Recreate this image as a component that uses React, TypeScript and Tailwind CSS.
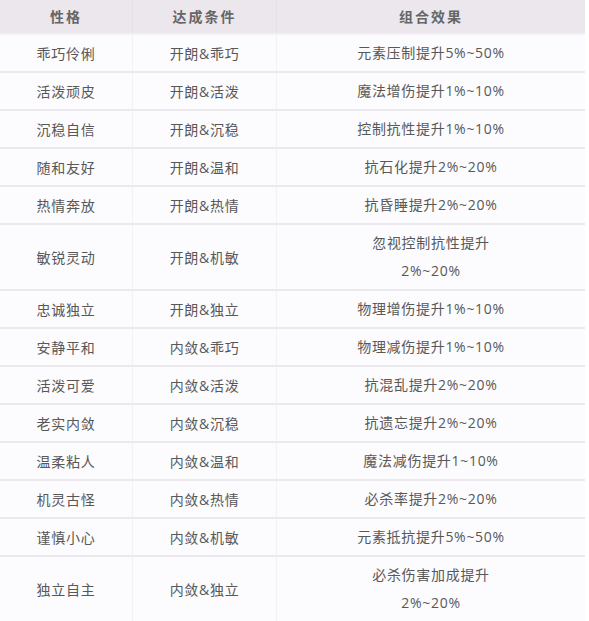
const ROWS: [string, string, string[]][] = [
  ['乖巧伶俐', '开朗&乖巧', ['元素压制提升5%~50%']],
  ['活泼顽皮', '开朗&活泼', ['魔法增伤提升1%~10%']],
  ['沉稳自信', '开朗&沉稳', ['控制抗性提升1%~10%']],
  ['随和友好', '开朗&温和', ['抗石化提升2%~20%']],
  ['热情奔放', '开朗&热情', ['抗昏睡提升2%~20%']],
  ['敏锐灵动', '开朗&机敏', ['忽视控制抗性提升', '2%~20%']],
  ['忠诚独立', '开朗&独立', ['物理增伤提升1%~10%']],
  ['安静平和', '内敛&乖巧', ['物理减伤提升1%~10%']],
  ['活泼可爱', '内敛&活泼', ['抗混乱提升2%~20%']],
  ['老实内敛', '内敛&沉稳', ['抗遗忘提升2%~20%']],
  ['温柔粘人', '内敛&温和', ['魔法减伤提升1~10%']],
  ['机灵古怪', '内敛&热情', ['必杀率提升2%~20%']],
  ['谨慎小心', '内敛&机敏', ['元素抵抗提升5%~50%']],
  ['独立自主', '内敛&独立', ['必杀伤害加成提升', '2%~20%']],
];

export default function App() {
  return (
    <div className="w-[589px] h-[621px] overflow-hidden bg-white font-['Open_Sans','Noto_Sans_CJK_SC',sans-serif] text-[14px] text-[#585858]">
      <div className="w-[585px]">
        <div className="grid grid-cols-[133px_144px_308px] h-[35px] bg-[#ebe7ed] border-b-2 border-[#f3f1f5] font-bold text-[#666] tracking-[2px]">
          <div className="flex items-center justify-center border-r border-[#e5e1e8]">性格</div>
          <div className="flex items-center justify-center border-r border-[#e5e1e8]">达成条件</div>
          <div className="flex items-center justify-center">组合效果</div>
        </div>
        {ROWS.map(([name, cond, effect]) => (
          <div
            key={name}
            className={`grid grid-cols-[133px_144px_308px] bg-[#fcfbfd] border-b-2 border-[#ebe9ee] tracking-[0.7px] ${effect.length > 1 ? 'h-[66px]' : 'h-[38px]'}`}
          >
            <div className="flex items-center justify-center border-r border-[#f3f1f5]">{name}</div>
            <div className="flex items-center justify-center border-r border-[#f3f1f5]">{cond}</div>
            <div className="flex flex-col items-center justify-center leading-[28px]">
              {effect.map((line) => (
                <span key={line}>{line}</span>
              ))}
            </div>
          </div>
        ))}
      </div>
    </div>
  );
}
